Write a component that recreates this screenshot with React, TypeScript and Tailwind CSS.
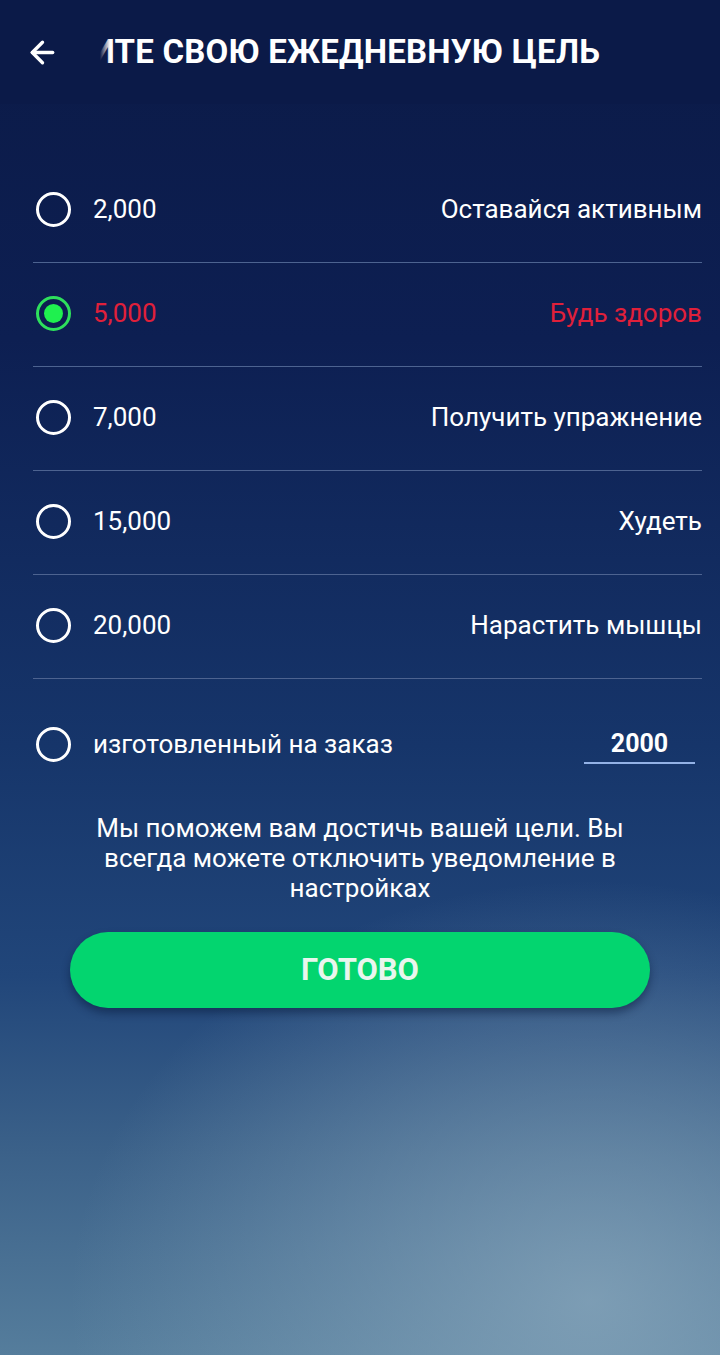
import React from "react";
import { ArrowLeft } from "lucide-react";

type Goal = { steps: string; label: string };

const goals: Goal[] = [
  { steps: "2,000", label: "Оставайся активным" },
  { steps: "5,000", label: "Будь здоров" },
  { steps: "7,000", label: "Получить упражнение" },
  { steps: "15,000", label: "Худеть" },
  { steps: "20,000", label: "Нарастить мышцы" },
];

const Radio = ({ checked }: { checked: boolean }) =>
  checked ? (
    <span className="flex h-[35px] w-[35px] shrink-0 items-center justify-center rounded-full border-[3px] border-[#2ee05c]">
      <span className="h-[19px] w-[19px] rounded-full bg-[#1ff04f]" />
    </span>
  ) : (
    <span className="h-[35px] w-[35px] shrink-0 rounded-full border-[3px] border-white" />
  );

export default function App() {
  const selected = 1;
  return (
    <div
      className="relative min-h-[1355px] w-[720px] overflow-hidden bg-[linear-gradient(180deg,#0b1a47_0%,#0d1f52_25%,#16356a_55%,#21467a_72%,#3b6189_85%,#557d9c_100%)] text-white"
      style={{ fontFamily: "Roboto, 'Noto Sans', sans-serif" }}
    >
      {/* light glow bottom right */}
      <div className="pointer-events-none absolute inset-0 bg-[radial-gradient(ellipse_520px_420px_at_82%_96%,rgba(140,170,190,0.75),rgba(140,170,190,0)_100%)]" />

      <div className="relative">
        <div className="flex h-[104px] items-center bg-[#0b1a48]">
          <div className="flex w-[100px] shrink-0 items-center pl-[25px]">
            <ArrowLeft size={35} strokeWidth={2.3} />
          </div>
          <div className="relative flex w-[500px] justify-end overflow-hidden">
            <div className="shrink-0 whitespace-nowrap text-[33px] font-bold leading-[40px] tracking-[0.2px]">
              ВЫБЕРИТЕ СВОЮ ЕЖЕДНЕВНУЮ ЦЕЛЬ
            </div>
            <div className="absolute inset-y-0 left-0 w-[10px] bg-[linear-gradient(90deg,#0b1a48,rgba(11,26,72,0))]" />
          </div>
        </div>

        {/* Goals list */}
        <div className="mt-[55px] pl-[33px] pr-[18px]">
          {goals.map((g, i) => {
            const on = i === selected;
            return (
              <div
                key={g.steps}
                className="flex h-[104px] items-center border-b border-[#4d6390] pb-[3px] pl-[3px]"
              >
                <Radio checked={on} />
                <span className={`ml-[22px] text-[26px] ${on ? "text-[#e0203a]" : "text-white"}`}>
                  {g.steps}
                </span>
                <span className={`ml-auto text-[26px] ${on ? "text-[#e0203a]" : "text-white"}`}>
                  {g.label}
                </span>
              </div>
            );
          })}

          {/* Custom goal */}
          <div className="flex h-[130px] items-center pl-[3px]">
            <Radio checked={false} />
            <span className="ml-[22px] text-[26px]">изготовленный на заказ</span>
            <div className="ml-auto mr-[7px] mt-[4px] flex w-[111px] flex-col items-center">
              <span className="text-[25px] font-bold leading-[30px]">2000</span>
              <span className="mt-[3px] h-[2px] w-full bg-[#93b2e6]" />
            </div>
          </div>
        </div>

        <p className="mx-auto mt-[4px] w-[560px] text-center text-[26px] leading-[30px]">
          Мы поможем вам достичь вашей цели. Вы всегда можете отключить уведомление в настройках
        </p>

        <button className="mx-auto mt-[29px] flex h-[76px] w-[580px] items-center justify-center rounded-full bg-[#03d56f] text-[31px] font-bold text-[#e9f6ee] shadow-[0_5px_8px_rgba(5,20,50,0.45)]">
          ГОТОВО
        </button>
      </div>
    </div>
  );
}
